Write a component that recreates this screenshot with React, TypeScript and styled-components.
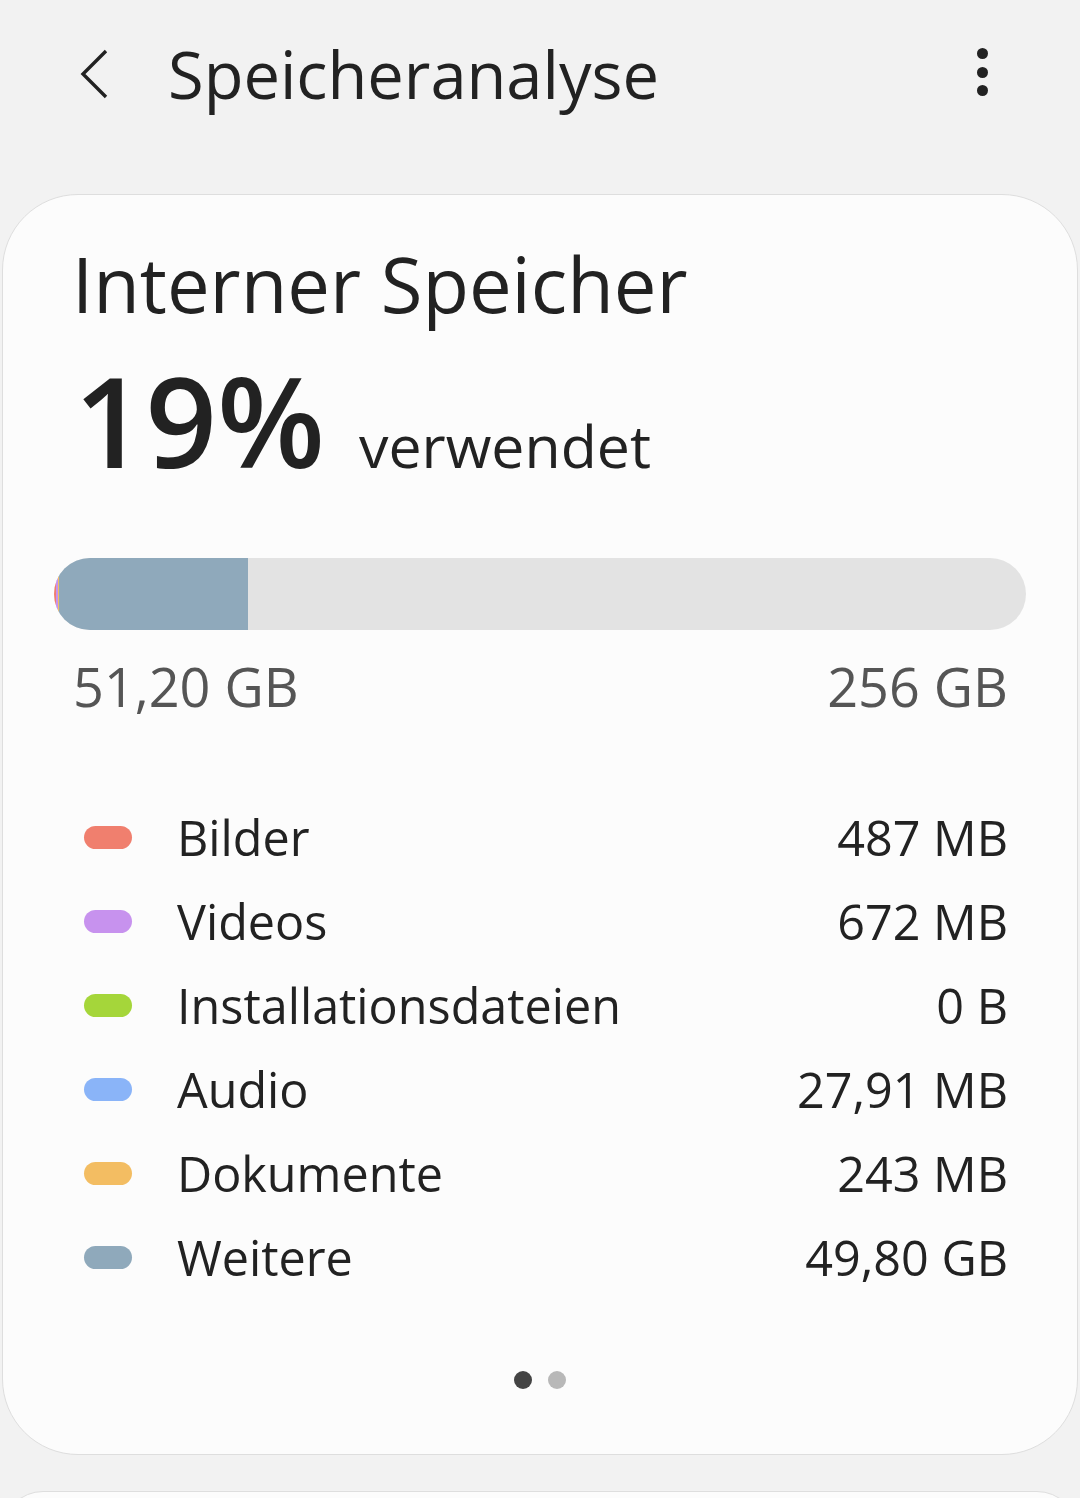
import * as React from "react";
import styled, { createGlobalStyle } from "styled-components";

const GlobalStyle = createGlobalStyle`
  html, body {
    margin: 0;
    padding: 0;
    background: #f2f2f2;
  }
  body {
    font-family: "Open Sans", "Noto Sans", sans-serif;
    color: #222;
  }
`;

interface ICategory {
  label: string;
  value: string;
  mb: number;
  color: string;
}

const TOTAL_MB = 256 * 1024;

const categories: ICategory[] = [
  { label: "Bilder", value: "487 MB", mb: 487, color: "#f07f6e" },
  { label: "Videos", value: "672 MB", mb: 672, color: "#c792ee" },
  { label: "Installationsdateien", value: "0 B", mb: 0, color: "#a5d63a" },
  { label: "Audio", value: "27,91 MB", mb: 27.91, color: "#8ab4f8" },
  { label: "Dokumente", value: "243 MB", mb: 243, color: "#f3bd62" },
  { label: "Weitere", value: "49,80 GB", mb: 49.8 * 1024, color: "#8fa9bb" },
];

export default function App() {
  return (
    <Page>
      <GlobalStyle />
      <Toolbar>
        <BackButton aria-label="Zurück">
          <svg width="30" height="50" viewBox="0 0 30 50">
            <path d="M27 2 L4 25 L27 48" fill="none" stroke="#222" strokeWidth="3.4" strokeLinejoin="miter" />
          </svg>
        </BackButton>
        <Title>Speicheranalyse</Title>
        <MenuButton aria-label="Mehr">
          <span />
          <span />
          <span />
        </MenuButton>
      </Toolbar>

      <Card>
        <CardTitle>Interner Speicher</CardTitle>
        <UsageRow>
          <Percent>19%</Percent>
          <UsageWord>verwendet</UsageWord>
        </UsageRow>

        <Bar>
          {categories.map(({ label, mb, color }) => (
            <Segment key={label} color={color} style={{ width: `${(mb / TOTAL_MB) * 100}%` }} />
          ))}
        </Bar>
        <BarLabels>
          <span>51,20 GB</span>
          <span>256 GB</span>
        </BarLabels>

        <Legend>
          {categories.map(({ label, value, color }) => (
            <LegendRow key={label}>
              <Pill color={color} />
              <LegendLabel>{label}</LegendLabel>
              <LegendValue>{value}</LegendValue>
            </LegendRow>
          ))}
        </Legend>

        <Pager>
          <PageDot active />
          <PageDot />
        </Pager>
      </Card>

      <NextCard />
    </Page>
  );
}

const Page = styled.div`
  width: 1080px;
  height: 1498px;
  overflow: hidden;
  background: #f2f2f2;
`;

const Toolbar = styled.header`
  height: 148px;
  display: flex;
  align-items: center;
  padding: 0 0 0 79px;
  box-sizing: border-box;
`;

const BackButton = styled.div`
  width: 30px;
  height: 50px;
  display: flex;
  svg { display: block; }
`;

const Title = styled.h1`
  margin: 0 0 0 59px;
  font-size: 65px;
  line-height: 80px;
  font-weight: 400;
  color: #222;
  flex: 1;
`;

const MenuButton = styled.div`
  width: 12px;
  margin-right: 91px;
  margin-top: -4px;
  display: flex;
  flex-direction: column;
  gap: 7.5px;

  span {
    width: 11px;
    height: 11px;
    border-radius: 50%;
    background: #222;
  }
`;

const Card = styled.section`
  margin: 46px 2px 0 2px;
  height: 1261px;
  box-sizing: border-box;
  background: #fcfcfc;
  border: 1px solid #dedede;
  border-radius: 76px;
  padding: 44px 51px 0 51px;
  display: flex;
  flex-direction: column;
`;

const CardTitle = styled.h2`
  margin: 0 0 0 18px;
  font-size: 76px;
  line-height: 90px;
  font-weight: 400;
  color: #222;
`;

const UsageRow = styled.div`
  margin: 26px 0 0 20px;
  display: flex;
  align-items: baseline;
  gap: 34px;
`;

const Percent = styled.span`
  font-size: 125px;
  line-height: 130px;
  font-weight: 600;
  color: #222;
`;

const UsageWord = styled.span`
  font-size: 59px;
  line-height: 70px;
  color: #222;
`;

const Bar = styled.div`
  margin-top: 73px;
  height: 72px;
  border-radius: 36px;
  background: #e3e3e3;
  overflow: hidden;
  display: flex;
`;

const Segment = styled.div<{ color: string }>`
  height: 100%;
  background: ${(p) => p.color};
`;

const BarLabels = styled.div`
  margin: 25px 18px 0 19px;
  display: flex;
  justify-content: space-between;
  font-size: 54px;
  line-height: 62px;
  color: #555;
`;

const Legend = styled.div`
  margin-top: 78px;
  padding: 0 18px 0 30px;
  display: flex;
  flex-direction: column;
`;

const LegendRow = styled.div`
  height: 84px;
  display: flex;
  align-items: center;
`;

const Pill = styled.span<{ color: string }>`
  width: 48px;
  height: 23px;
  border-radius: 12px;
  background: ${(p) => p.color};
  flex-shrink: 0;
`;

const LegendLabel = styled.span`
  margin-left: 45px;
  flex: 1;
  font-size: 48.5px;
  line-height: 84px;
  color: #222;
`;

const LegendValue = styled.span`
  font-size: 48.5px;
  line-height: 84px;
  color: #222;
`;

const Pager = styled.div`
  margin-top: 72px;
  display: flex;
  justify-content: center;
  gap: 16px;
`;

const PageDot = styled.span<{ active?: boolean }>`
  width: 18px;
  height: 18px;
  border-radius: 50%;
  background: ${(p) => (p.active ? "#444" : "#b8b8b8")};
`;

const NextCard = styled.div`
  margin: 36px 2px 0 2px;
  height: 80px;
  background: #fcfcfc;
  border: 1px solid #dedede;
  border-radius: 76px;
`;
